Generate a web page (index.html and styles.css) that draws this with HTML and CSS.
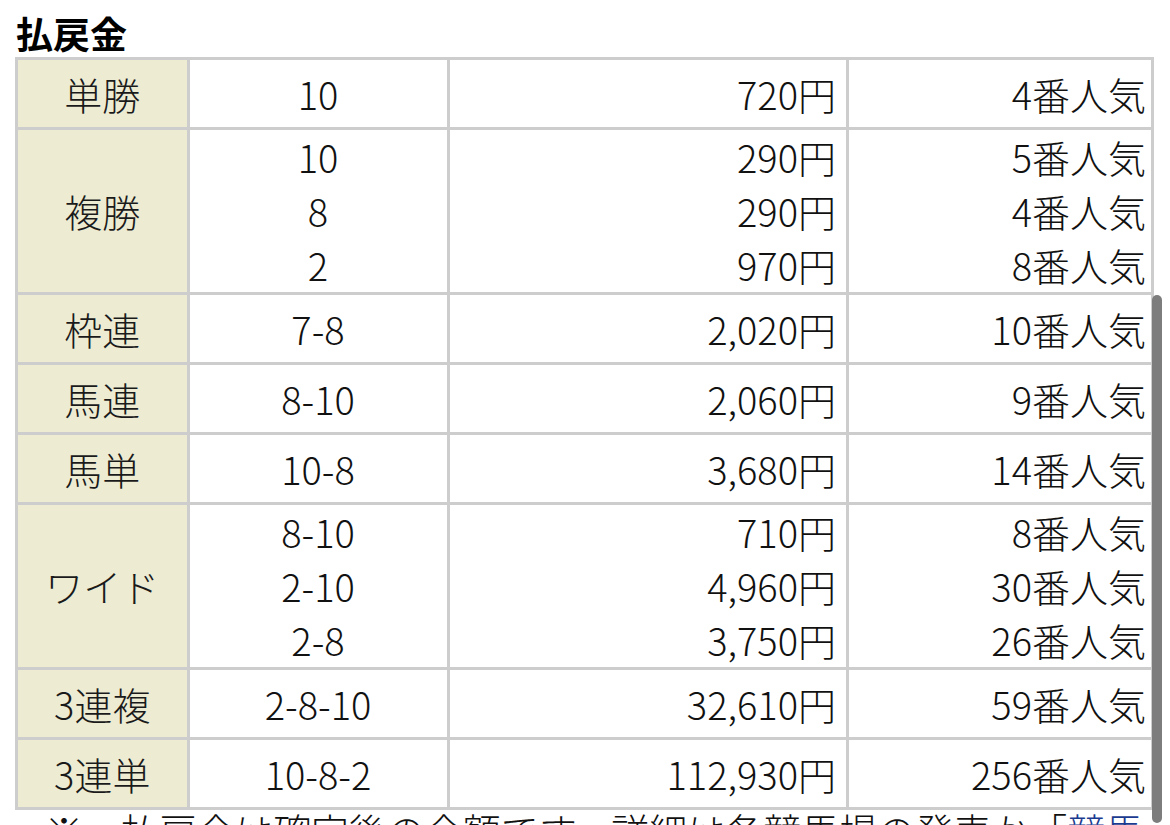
FILE: index.html
```html
<!DOCTYPE html>
<html lang="ja">
<head>
<meta charset="utf-8">
<title>払戻金</title>
<link rel="stylesheet" href="styles.css">
</head>
<body>
<div class="page">
  <h2 class="title">払戻金</h2>
  <table class="payout">
    <colgroup>
      <col class="c-type"><col class="c-num"><col class="c-pay"><col class="c-pop">
    </colgroup>
    <tbody>
      <tr class="single"><th>単勝</th><td class="num">10</td><td class="pay">720円</td><td class="pop">4番人気</td></tr>
      <tr class="multi"><th>複勝</th>
        <td class="num"><div>10</div><div>8</div><div>2</div></td>
        <td class="pay"><div>290円</div><div>290円</div><div>970円</div></td>
        <td class="pop"><div>5番人気</div><div>4番人気</div><div>8番人気</div></td></tr>
      <tr class="single"><th>枠連</th><td class="num">7-8</td><td class="pay">2,020円</td><td class="pop">10番人気</td></tr>
      <tr class="single"><th>馬連</th><td class="num">8-10</td><td class="pay">2,060円</td><td class="pop">9番人気</td></tr>
      <tr class="single"><th>馬単</th><td class="num">10-8</td><td class="pay">3,680円</td><td class="pop">14番人気</td></tr>
      <tr class="multi"><th>ワイド</th>
        <td class="num"><div>8-10</div><div>2-10</div><div>2-8</div></td>
        <td class="pay"><div>710円</div><div>4,960円</div><div>3,750円</div></td>
        <td class="pop"><div>8番人気</div><div>30番人気</div><div>26番人気</div></td></tr>
      <tr class="single"><th>3連複</th><td class="num">2-8-10</td><td class="pay">32,610円</td><td class="pop">59番人気</td></tr>
      <tr class="single"><th>3連単</th><td class="num">10-8-2</td><td class="pay">112,930円</td><td class="pop">256番人気</td></tr>
    </tbody>
  </table>
  <p class="note">※　払戻金は確定後の金額です。詳細は各競馬場の発表か「<a href="#">競馬</a></p>
  <div class="scroll-indicator"></div>
</div>
</body>
</html>
```

FILE: styles.css
```css
html, body {
  margin: 0;
  padding: 0;
  background: #ffffff;
  overflow: hidden;
}
body {
  font-family: "Noto Sans CJK JP", "Noto Sans", sans-serif;
  color: #111111;
}
.page {
  position: relative;
  width: 1170px;
  height: 825px;
  overflow: hidden;
}
.title {
  margin: 0;
  padding: 15px 0 0 16px;
  height: 57px;
  box-sizing: border-box;
  font-size: 37px;
  line-height: 37px;
  font-weight: 700;
  color: #000;
}
.payout {
  margin-left: 15px;
  width: 1139px;
  border-collapse: collapse;
  table-layout: fixed;
  border: 3px solid #cdcdcd;
  font-size: 38px;
  font-weight: 300;
}
.c-type { width: 171.5px; }
.c-num { width: 260px; }
.c-pay { width: 399.5px; }
.c-pop { width: 305px; }
.payout th,
.payout td {
  border: 3px solid #cdcdcd;
  padding: 0;
  line-height: 54px;
  vertical-align: middle;
  white-space: nowrap;
}
.payout th {
  background: #edecd3;
  font-weight: 300;
  text-align: center;
  color: #1a1a1a;
}
.single th, .single td { height: 67px; }
.multi th, .multi td { height: 162px; }
.num { text-align: center; }
.pay { text-align: right; padding-right: 10px !important; }
.pop { text-align: right; padding-right: 5px !important; }
.note {
  margin: 0;
  padding-left: 45px;
  font-size: 38px;
  line-height: 40px;
  font-weight: 300;
  white-space: nowrap;
  color: #111;
}
.note a { color: #1a3b8f; text-decoration: none; }
.scroll-indicator {
  position: absolute;
  left: 1152px;
  top: 295px;
  width: 10px;
  height: 528px;
  border-radius: 5px;
  background: #7d7d7d;
}
```
